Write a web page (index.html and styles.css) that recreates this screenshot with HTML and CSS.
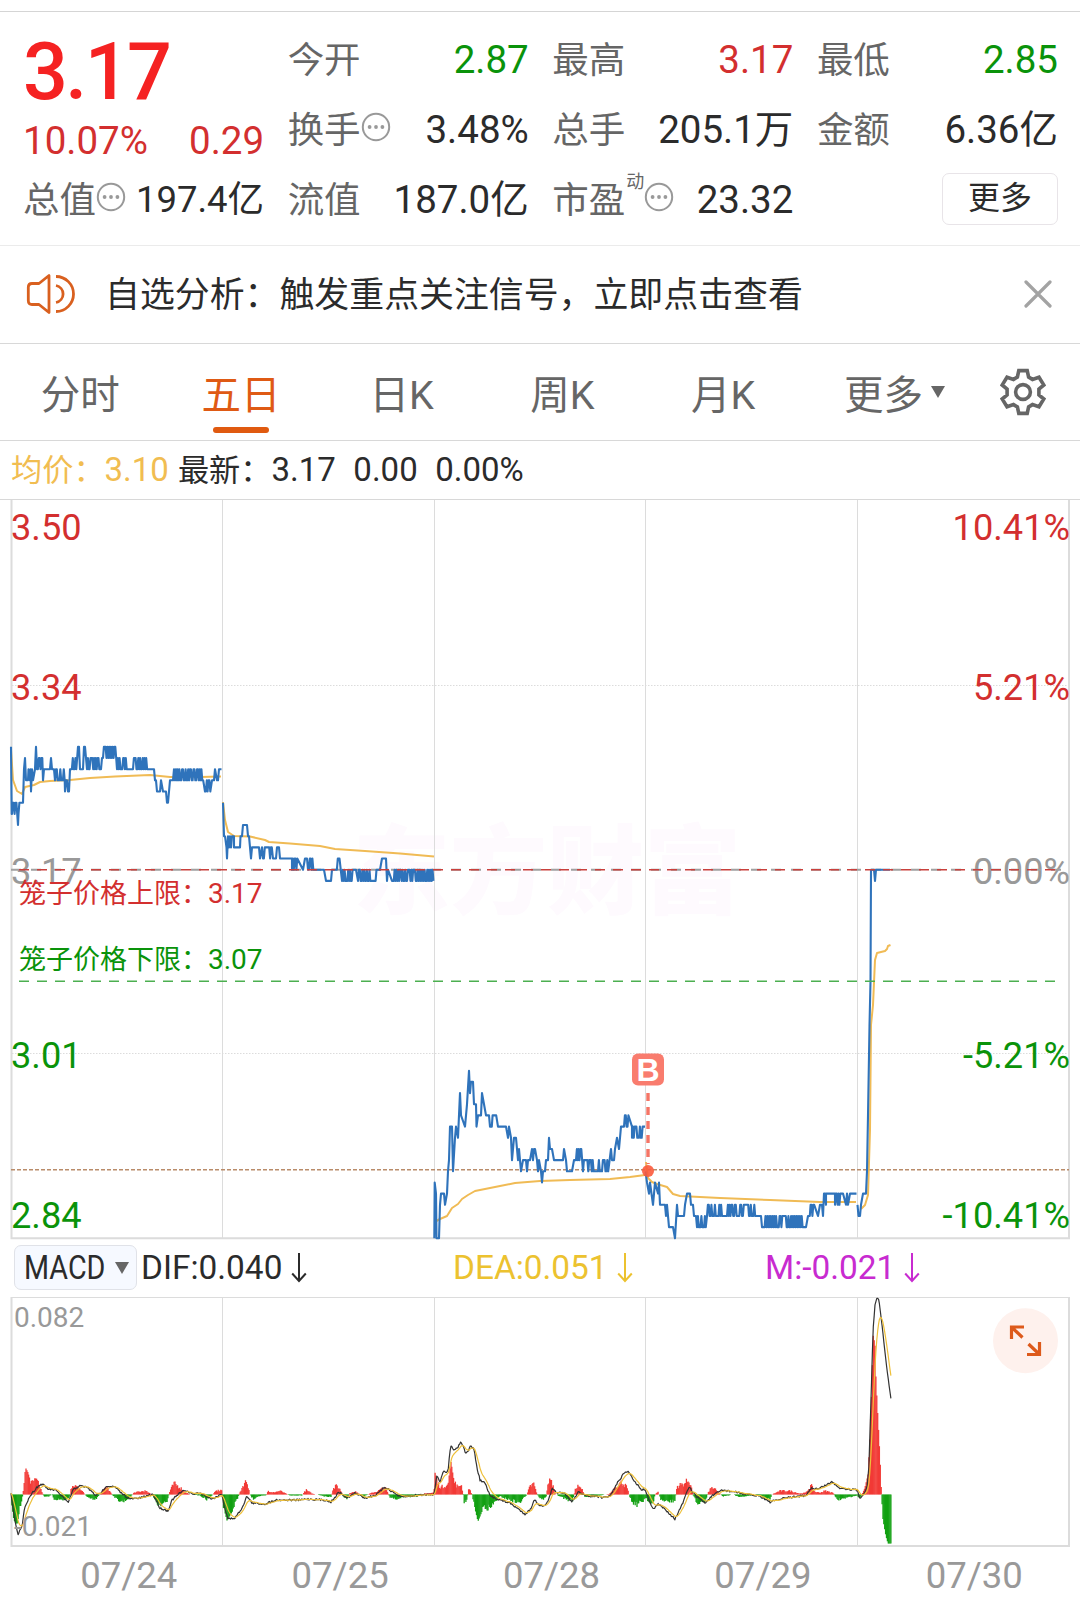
FILE: index.html
```html
<!DOCTYPE html>
<html lang="zh-CN">
<head>
  <meta charset="UTF-8" />
  <meta name="viewport" content="width=device-width, initial-scale=1" />
  <title>五日行情</title>
  <link rel="stylesheet" href="styles.css">
</head>
<body>
  <svg class="defs" width="0" height="0">
    <symbol id="dots" viewBox="0 0 30 30">
      <circle cx="15" cy="15" r="13.2" fill="none" stroke="#999" stroke-width="2" />
      <circle cx="8.6" cy="15" r="1.9" fill="#999" />
      <circle cx="15" cy="15" r="1.9" fill="#999" />
      <circle cx="21.4" cy="15" r="1.9" fill="#999" />
    </symbol>
    <symbol id="down" viewBox="0 0 16 30">
      <path d="M8 0V28M1.2 20.5L8 28L14.8 20.5" fill="none" stroke="currentColor" stroke-width="2" />
    </symbol>
  </svg>

  <div class="quote">
    <div class="price-col">
      <div class="price">3.17</div>
      <div class="cell change"><span>10.07%</span><span>0.29</span></div>
      <div class="cell"><label>总值</label><svg class="dots"><use href="#dots" /></svg><b class="tight">197.4亿</b></div>
    </div>
    <div class="col">
      <div class="cell"><label>今开</label><b class="green">2.87</b></div>
      <div class="cell"><label>换手</label><svg class="dots"><use href="#dots" /></svg><b>3.48%</b></div>
      <div class="cell"><label>流值</label><b>187.0亿</b></div>
    </div>
    <div class="col">
      <div class="cell"><label>最高</label><b class="red">3.17</b></div>
      <div class="cell"><label>总手</label><b>205.1万</b></div>
      <div class="cell"><label>市盈</label><sup>动</sup><svg class="dots"><use href="#dots" /></svg><b>23.32</b></div>
    </div>
    <div class="col">
      <div class="cell"><label>最低</label><b class="green">2.85</b></div>
      <div class="cell"><label>金额</label><b>6.36亿</b></div>
      <div class="cell"><button class="more">更多</button></div>
    </div>
  </div>

  <div class="notice">
    <svg class="speaker" width="50" height="42" viewBox="0 0 50 42">
      <g fill="none" stroke="#d9601f" stroke-width="2.8">
        <path d="M23 2.5V39.5L13 31.5H6Q2.3 31.5 2.3 27.5V14.5Q2.3 10.5 6 10.5H13Z" stroke-linejoin="round" />
        <path d="M30 12.5A9 8.7 0 0 1 30 29.5" />
        <path d="M30 3.5A17.5 17.5 0 0 1 30 38.5" />
      </g>
    </svg>
    <span>自选分析：触发重点关注信号，立即点击查看</span>
    <svg class="close" width="28" height="28" viewBox="0 0 28 28">
      <path d="M2 2L26 26M26 2L2 26" stroke="#a3a3a3" stroke-width="3.2" stroke-linecap="round" />
    </svg>
  </div>

  <div class="tabs">
    <div class="tab">分时</div>
    <div class="tab active">五日</div>
    <div class="tab">日K</div>
    <div class="tab">周K</div>
    <div class="tab">月K</div>
    <div class="tab tab-more">更多<i class="caret"></i></div>
    <svg class="gear" width="48" height="48" viewBox="-24 -24 48 48">
      <g fill="none" stroke="#666" stroke-width="3.6">
        <path d="M-4.2 -21.4H4.2L5.6 -15L9.5 -12.6L16 -14.8L20.8 -7L15.9 -3V3L20.8 7L16 14.8L9.5 12.6L5.6 15L4.2 21.4H-4.2L-5.6 15L-9.5 12.6L-16 14.8L-20.8 7L-15.9 3V-3L-20.8 -7L-16 -14.8L-9.5 -12.6L-5.6 -15Z" />
        <circle r="7.4" />
      </g>
    </svg>
  </div>

  <div class="info">
    <span class="avg">均价：<em>3.10</em></span>
    <span>最新：<em>3.17</em></span>
    <em>0.00</em>
    <em>0.00%</em>
  </div>

  <svg class="chart" width="1080" height="740" viewBox="0 500 1080 740">
    <text class="watermark" x="353" y="906">东方财富</text>
    <g class="grid">
      <path d="M11.5 500V1238.5M1069 500V1238.5M10.5 1238.3H1070" stroke-width="2" />
      <path d="M222.5 500V1238M434.5 500V1238M645.5 500V1238M857.5 500V1238" />
      <path d="M12 685.5H1069M12 1053.5H1069" stroke-dasharray="1.5 1.5" />
    </g>
    <path d="M11 1169.8H1069" stroke="#b98c6a" stroke-width="1.4" stroke-dasharray="4 2" />
    <g class="axis">
      <text x="11" y="540" class="red">3.50</text>
      <text x="11" y="700" class="red">3.34</text>
      <text x="11" y="883.5" class="gray">3.17</text>
      <text x="11" y="1067.5" class="green">3.01</text>
      <text x="11" y="1227.5" class="green">2.84</text>
      <text x="1070" y="540" class="red end">10.41%</text>
      <text x="1070" y="700" class="red end">5.21%</text>
      <text x="1070" y="883.5" class="gray end">0.00%</text>
      <text x="1070" y="1067.5" class="green end">-5.21%</text>
      <text x="1070" y="1227.5" class="green end">-10.41%</text>
    </g>
    <path d="M11 869.7H1069" stroke="#a0a0a0" stroke-width="2" stroke-dasharray="10 10" />
    <g id="priceLines"></g>
    <path d="M19 869.7H1061" stroke="#c9403c" stroke-width="1.6" stroke-dasharray="10 8" />
    <path d="M19 981.3H1056" stroke="#4caf50" stroke-width="1.5" stroke-dasharray="10 8" />
    <g class="cage">
      <text x="19" y="902.5" class="red">笼子价格上限：<tspan x="208">3.17</tspan></text>
      <text x="19" y="968.5" class="green">笼子价格下限：<tspan x="208">3.07</tspan></text>
    </g>
    <!-- buy marker -->
    <path d="M648 1093V1164" stroke="#f57465" stroke-width="3.4" stroke-dasharray="8 6" />
    <circle cx="648" cy="1171" r="6" fill="#fb5a3c" fill-opacity="0.9" />
    <rect x="632" y="1053.5" width="32" height="32" rx="6" fill="#f97c6e" />
    <text class="buy" x="648" y="1080.5">B</text>
  </svg>

  <div class="macd-bar">
    <div class="chip"><span>MACD</span><i class="caret"></i></div>
    <div class="ind dif">DIF:0.040<svg class="down"><use href="#down" /></svg></div>
    <div class="ind dea">DEA:0.051<svg class="down"><use href="#down" /></svg></div>
    <div class="ind m">M:-0.021<svg class="down"><use href="#down" /></svg></div>
  </div>

  <svg class="chart" width="1080" height="251" viewBox="0 1297 1080 251">
    <g class="grid">
      <path d="M11.5 1297V1546M1069 1297V1546M10.5 1546H1070" stroke-width="2" />
      <path d="M11 1297.5H1069M222.5 1297V1546M434.5 1297V1546M645.5 1297V1546M857.5 1297V1546" />
    </g>
    <g id="macdLines"></g>
    <g class="scale">
      <text x="14" y="1327">0.082</text>
      <text x="14" y="1536">-0.021</text>
    </g>
    <circle cx="1025.5" cy="1340.7" r="32.5" fill="#fef1ed" />
    <path d="M1024 1327H1011.5V1339M1012 1327.500L1022.500 1337.500M1027 1354.500H1039.500V1342M1039 1354L1028.500 1344" fill="none" stroke="#dd5a1b" stroke-width="3.2" />
  </svg>

  <div class="dates">
    <span>07/24</span><span>07/25</span><span>07/28</span><span>07/29</span><span>07/30</span>
  </div>

  <script src="chart.js"></script>
</body>
</html>
```
FILE: styles.css
```css
body {
  margin: 0;
  width: 1080px;
  height: 1600px;
  overflow: hidden;
  background: #fff;
  color: #2b2b2b;
  font-family: Roboto, "Noto Sans CJK SC", sans-serif;
}
.defs {
  position: absolute;
}
.red {
  color: #d32f2f;
  fill: #d32f2f;
}
.green {
  color: #0a930a;
  fill: #0a930a;
}
.gray {
  fill: #999;
}

/* quote header */
.quote {
  display: grid;
  grid-template-columns: repeat(4, 1fr);
  column-gap: 23.5px;
  height: 234px;
  margin-top: 11px;
  padding: 13px 22px 0 23px;
  box-sizing: border-box;
  border-top: 1px solid #d5d5d5;
}
.cell {
  display: flex;
  align-items: center;
  height: 70px;
  line-height: 70px;
  white-space: nowrap;
}
.cell label {
  padding-top: 2px;
  font-size: 36.5px;
  color: #666;
}
.cell b {
  margin-left: auto;
  font-size: 38.5px;
  font-weight: 400;
}
.cell b.tight {
  font-size: 36.5px;
}
.cell sup {
  align-self: flex-start;
  margin: 7px 0 0 1px;
  font-size: 18px;
  line-height: 20px;
  color: #666;
}
.dots {
  width: 30px;
  height: 30px;
  margin-top: -6px;
}
.price {
  height: 92px;
  line-height: 95px;
  font-size: 79px;
  font-weight: 500;
  letter-spacing: -2.6px;
  color: #f52222;
}
.change {
  justify-content: space-between;
  height: 48px;
  line-height: 48px;
  font-size: 38.5px;
  color: #d32f2f;
}
.more {
  width: 116px;
  height: 52px;
  margin: -3px 0 0 auto;
  padding: 0;
  border: 1.5px solid #e8e4e8;
  border-radius: 7px;
  background: #fff;
  font-family: inherit;
  font-size: 32px;
  line-height: 49px;
  color: #2b2b2b;
}

/* notice */
.notice {
  display: flex;
  align-items: center;
  height: 97px;
  padding: 0 28px 0 26px;
  border-top: 1px solid #ebebeb;
  border-bottom: 1px solid #d8d8d8;
  font-size: 34.9px;
  line-height: 60px;
}
.notice span {
  margin-left: 29px;
  padding-top: 2px;
}
.speaker, .close {
  margin-top: -1px;
}
.close {
  margin-left: auto;
}

/* tabs */
.tabs {
  display: flex;
  align-items: center;
  height: 96px;
  border-bottom: 1px solid #d8d8d8;
  font-size: 39.5px;
  color: #666;
}
.tab {
  position: relative;
  width: 160.7px;
  height: 96px;
  line-height: 103px;
  text-align: center;
}
.tab.active {
  color: #df5a14;
}
.tab.active::after {
  content: "";
  position: absolute;
  left: 52px;
  bottom: 7px;
  width: 56px;
  height: 6px;
  border-radius: 3px;
  background: #e05a10;
}
.tab-more {
  width: 182px;
}
.caret {
  display: inline-block;
  border: 7px solid transparent;
  border-top: 12px solid #666;
  border-bottom: 0;
}
.tab-more .caret {
  margin-left: 8px;
  vertical-align: 11px;
}
.gear {
  margin-left: 14px;
}

/* average / latest */
.info {
  display: flex;
  align-items: center;
  height: 58px;
  padding-left: 11px;
  border-bottom: 1px solid #d8d8d8;
  font-size: 31.2px;
  line-height: 60px;
}
.info em {
  font-size: 33px;
  font-style: normal;
  margin-right: 17.5px;
}
.info .avg {
  color: #f1bd51;
}
.info .avg em {
  margin-right: 9px;
}

/* charts */
.chart {
  display: block;
}
.grid path {
  fill: none;
  stroke: #dcdcdc;
}
.axis {
  font-size: 36.2px;
}
.end {
  text-anchor: end;
}
.cage {
  font-size: 27px;
}
.cage tspan {
  font-size: 28px;
}
.watermark {
  font-size: 97px;
  font-weight: 900;
  fill: #fefafe;
}
.buy {
  font-family: "Liberation Sans", sans-serif;
  font-size: 32px;
  font-weight: 700;
  fill: #fff;
  text-anchor: middle;
}
.scale {
  font-size: 28px;
  fill: #999;
}
#priceLines path, #macdLines path {
  fill: none;
  stroke-linejoin: round;
}

.macd-bar {
  display: flex;
  align-items: center;
  height: 57px;
  padding: 0 0 0 14px;
  font-size: 33.4px;
}
.chip {
  display: flex;
  align-items: center;
  width: 123px;
  height: 45px;
  box-sizing: border-box;
  padding-left: 9px;
  margin: -2px 4px 0 0;
  border: 1px solid #e0e2e8;
  border-radius: 7px;
  background: #f6f9ff;
}
.chip span {
  width: 91px;
  font-size: 33px;
  transform: scaleX(0.87);
  transform-origin: left;
}
.ind {
  display: flex;
  align-items: center;
  width: 312px;
  margin-top: -2px;
}
.down {
  width: 16px;
  height: 30px;
  margin-left: 9px;
}
.dea {
  color: #ecc22f;
}
.m {
  color: #c82bd0;
}

.dates {
  display: flex;
  padding-left: 23px;
  font-size: 36.5px;
  line-height: 56px;
  color: #999;
}
.dates span {
  width: 211.6px;
  text-align: center;
}
```
FILE: chart.js
```js
// price points: [x, cents above 3.00]; runs: [x0, x1, high, low] bounce between two ticks
const days = [
  [[11,28],[11.7,22],[12,17,23,22],[18,21],[18.5,22,23,22],[23,23],[24,26],[25,27],[26,25],[28,25],[28.5,26],[30,25],[30.5,26],[31,24],[32,26],[33,25],[35,26],[36,28],[37,26],
   [37,43,27,26],[43,25],[44,26],[50,26],[51,27],[52,26],[54,26],[55,65,26,25],[65,24],[66,25],[67,25],[68,24],[69,24],[70,26],[71,77,27,26],[78,28],[79,28],[80,26],[83,26],[84,28],[85,28],[87,26],
   [87,100,27,26],[101,26],[102,27],[103,117,28,27],[117,127,27,26],[128,26],[132,26],[133,153,27,26],[154,26],[155,25],[156,25],[157,24],[160,24],[161,25],[163,24],[166,24],[167,23],[168,23],[169,24],[170,25],[173,25],[174,26],
   [175,204,26,25],[205,211,25,24],[212,25],[214,25],[215,26],[217,25],[218,25],[219,26],[221.5,26]],
  [[223,23],[224,20],[225,20],[226.5,19],[227,18],[228,20],[229,19],[230,20],[231,19],[232,20],[234,20],[234,19],[240,19],[240.5,20],[242,20],[243,21],[247,21],[248,20],[249,20],[250,19],[251,18],[252,19],[259,19],[260,18],[262,19],
   [263,272,19,18],[273,18],[276,18],[277,19],[279,19],[280,18],[292,18],[292,298,18,17],[303,17],[305,18],[307,18],[308,314,18,17],[315,17],[324,17],[326,16],[331,16],[332,17],[335,17],[336,340,18,17],[342,353,17,16],[353,17],[356,17],
   [358,378,17,16],[380,17],[382,18],[386,18],[387,16],[388,17],[392,434,17,16]],
  [[434.3,-16],[434.7,-11],[436,-12],[436.5,-16],[439,-16],[440,-13],[441,-12],[444,-12],[445,-13],[447,-12],[448,-10],[449,-9],[450,-6],[452,-6],[453,-10],[455,-7],[456,-6],[458,-7],[459,-5],[460,-3],[461,-5],[463,-5.5],[465,-6],[467,-4],[469,-1],[470,-3],[471,-2],[473,-2],
   [474,-4],[476,-4],[476.5,-6],[478,-5],[481,-5],[482,-3],[484,-4],[486,-5],[489,-5],[490,497,-5,-6],[498,-6],[506,-6],[508,-7],[509,-6],[511,-7],[512,-9],[514,-7],[516,-7],[517,-8],[518,-9],[519,-8],[521,-10],[523,-9],[526,-9],[527,-10],[528,-9],[530,-9],[532,-8],[533,-9],[534,-8],[535,-8],
   [537,-9],[538,-10],[539,-9],[541,-10],[542,-11],[543,-10],[545,-10],[546,-9],[548,-9],[549,-7],[550,-8],[552,-8],[554,-9],[563,-9],[564,-8],[566,-9],[567,-10],[572,-10],[574,-9],[576,582,-8,-9],[583,600,-9,-10],[602,609,-9,-10],[611,-8],[612,-9],[614,-9],[615,-8],[617,-7],[619,-8],[621,-6],[623,-6],
   [624,629,-5,-6],[632,-6],[632,643,-6,-7],[645,-6]],
  [[645.5,-10],[647,-11],[649,-12],[650,-11],[653,-13],[655,-11],[658,-12],[659,-11],[660,-13],[665,-13],[666,-14],[667,-13],[669,-15],[673,-15],[675,-16],[677,-13],[678,-14],[684,-14],[685,-13],[687,-12],[690,-12],[691,-13],[693,-13],[694,-14],[696,-14],
   [697,706,-14,-15],[707,722,-13,-14],[725,-14],[727,756,-13,-14],[757,-14],[761,-14],[762,803,-14,-15],[806,-15],[808,815,-13,-14],[818,-14],[820,-13],[822,-13],[823,-14],[824,-12],[825,-12],[826,-13],[826,-12],[835,-12],[835,841,-12,-13],[843,-12],[846,-13],[847,-12],[848,-13],[850,-12],[856.5,-12]],
  [[857.5,-13],[858.5,-14],[860,-14],[861,-13],[863,-12],[866,-12],[867,-10],[868,-5],[869.5,3],[870.5,7],[871,17],[874,17],[875,16],[876,17],[890,17]]
];

const averages = [
  "11,750 13,780 17,791 22,794 25,787 34,785 40,782 50,781 70,780 90,778 115,776.5 150,775 160,776 170,777 200,777 221,776.5",
  "223,802 225,820 228,832 234,836 250,836.5 265,840 269,842 290,843.5 320,846 335,849 365,851 400,853.5 434,856.500",
  "434.500,1222 440,1219 447,1216 452,1208 458,1204 462,1199 468,1195 475,1191 485,1189 500,1186 515,1183 540,1181 570,1180 610,1179 630,1177 645,1175",
  "646,1162 648,1178 652,1182 657,1184 667,1187 673,1194 680,1196 720,1198 770,1200 820,1202 856,1202",
  "861,1209 865,1205 868,1195 870,1130 871,1025 873,1005 875,960 877,953 885,951 887,949 888,946 890.500,945"
];

const step = 211.6 / 240;
const priceY = c => 869.7 - (c - 17) * 11.17;

// repeatable noise
let seed = 7;
function rand() {
  seed = (seed * 16807) % 2147483647;
  return seed / 2147483647;
}

function addPath(group, points, color, width) {
  const path = document.createElementNS("http://www.w3.org/2000/svg", "path");
  path.setAttribute("d", "M" + points.map(p => p[0].toFixed(1) + " " + p[1].toFixed(1)).join("L"));
  path.setAttribute("stroke", color);
  path.setAttribute("stroke-width", width);
  group.appendChild(path);
}

const priceLines = document.getElementById("priceLines");
averages.forEach(line => {
  addPath(priceLines, line.split(" ").map(p => p.split(",").map(Number)), "#f0bb55", 2);
});
days.forEach(day => {
  const points = [];
  day.forEach(p => {
    if (p.length === 2) {
      points.push([p[0], priceY(p[1])]);
      return;
    }
    let up = false;
    for (let x = p[0]; x <= p[1]; x += step) {
      points.push([x, priceY(up ? p[2] : p[3])]);
      if (rand() < 0.65) up = !up;
    }
  });
  addPath(priceLines, points, "#2f73bb", 2.1);
});

const zero = 1494.5;
const dif = "11,1494 14,1515 16,1525 18,1534 20,1530 22,1527 25,1506 30,1496 37,1487 42,1484 48,1489 55,1490 60,1494 68,1503 73,1490 79,1486 87,1487 95,1495 100,1494 106,1486 115,1487 121,1493 130,1499 140,1498 153,1494 160,1508 168,1511 172,1500 180,1493 185,1490 192,1494 200,1493 212,1499 222,1494 224,1505 228,1519 235,1518 242,1508 247,1496 252,1503 265,1504 275,1500 300,1500 306,1499 325,1500 331,1502 339,1492 347,1498 355,1493 365,1498 376,1495 385,1487 393,1492 400,1497 420,1495 434,1494 437,1475 440,1482 443,1472 448,1472 450,1450 451,1445 454,1450 458,1447 461,1441 466,1454 471,1446 474,1449 477,1468 480,1480 485,1483 490,1496 500,1500 510,1503 525,1514 530,1510 535,1499 538,1504 543,1507 548,1502 552,1489 556,1492 565,1494 572,1502 579,1491 585,1496 595,1496 602,1498 610,1496 618,1482 625,1472 629,1472 635,1482 642,1490 645,1489 650,1503 654,1509 658,1504 666,1510 675,1519 682,1505 689,1487 695,1495 705,1503 712,1496 722,1490 735,1492 750,1495 760,1496 770,1502 785,1498 800,1496 806,1496 811,1488 818,1489 832,1482 840,1488 857,1490 860,1498 864,1494 867,1487 869,1465 871,1400 873,1330 875,1305 877,1297.5 879,1300 882,1325 887,1370 891.4,1402";
const bars = "11,0 12,-12 14,-26 17,-30 20,-14 23,0 24,12 25,22 26,26 28,22 31,12 34,15 37,15 40,8 43,0 44,-2 49,-2 52,0 54,-5 66,-6 70,-2 71,6 75,10 80,7 85,0 88,-4 95,-6 100,0 103,5 107,8 112,0 118,-6 123,-8 130,-3 134,2 145,4 152,0 156,-8 160,-13 167,-8 170,4 174,12 180,8 186,2 190,0 200,-1 207,-6 213,0 216,4 222,5 223,-10 227,-26 232,-18 238,-3 241,5 244,12 247,15 250,0 253,-5 258,-2 266,-1 268,4 272,2 280,4 290,-1 302,-1 306,5 312,1 325,-2 331,-3 333,6 337,10 341,4 344,-4 347,-5 350,2 357,3 362,-3 370,1 378,4 385,8 390,-3 397,-6 405,-2 415,-3 425,1 434,2 435,22 438,12 441,8 445,10 448,10 451,33 454,14 458,8 461,12 463,3 464,-9 466,-8 468,0 469,8 472,0 474,-10 478,-27 484,-12 490,-16 495,-8 500,-2 510,-6 520,-9 527,0 530,9 534,12 537,0 542,-6 546,-3 549,17 552,13 556,0 560,-2 568,-6 573,-6 575,5 578,9 582,6 585,-3 600,-1 610,1 615,8 622,14 627,8 629,0 632,-8 637,-11 643,-7 646,-3 650,-10 653,-12 655,0 658,3 661,-6 668,-8 675,-7 677,9 684,12 689,16 691,10 693,0 697,-9 705,-8 709,4 712,8 717,4 723,-2 733,0 740,-3 755,0 765,-4 770,-5 772,0 780,4 790,4 800,1 806,2 811,10 815,3 820,2 825,4 833,2 837,-6 845,-4 857,-1 860,-4 862,0 865,7 868,20 870,60 872,110 873,160 875,150 876,115 878,75 880,38 881.5,0 883,-25 886,-42 888,-49 891,-49";

// resample to one value per minute
function resample(text) {
  const pts = text.split(" ").map(p => p.split(",").map(Number));
  const out = [];
  let i = 0;
  for (let x = pts[0][0]; x <= pts[pts.length - 1][0]; x += step) {
    while (i < pts.length - 2 && pts[i + 1][0] < x) i++;
    const [x0, y0] = pts[i];
    const [x1, y1] = pts[i + 1];
    out.push([x, y0 + (y1 - y0) * (x - x0) / (x1 - x0)]);
  }
  return out;
}

const macdLines = document.getElementById("macdLines");
resample(bars).forEach(([x, h]) => {
  const big = Math.abs(h) > 16 || x > 862;
  const v = big ? h : h * (0.65 + rand() * 0.5);
  if (Math.abs(v) < 0.3) return;
  addPath(macdLines, [[x, zero], [x, zero - v]], v > 0 ? "#f23a36" : "#12a012", 1.3);
});

const difPoints = resample(dif).map(([x, y]) => [x, x > 862 ? y : y + (rand() - 0.5) * 2]);
let ema = difPoints[0][1];
const deaPoints = difPoints.map(([x, y]) => {
  ema += (y - ema) * 0.22;
  return [x, ema];
});
addPath(macdLines, difPoints, "#333", 1.2);
addPath(macdLines, deaPoints, "#eec03a", 1.2);
```
